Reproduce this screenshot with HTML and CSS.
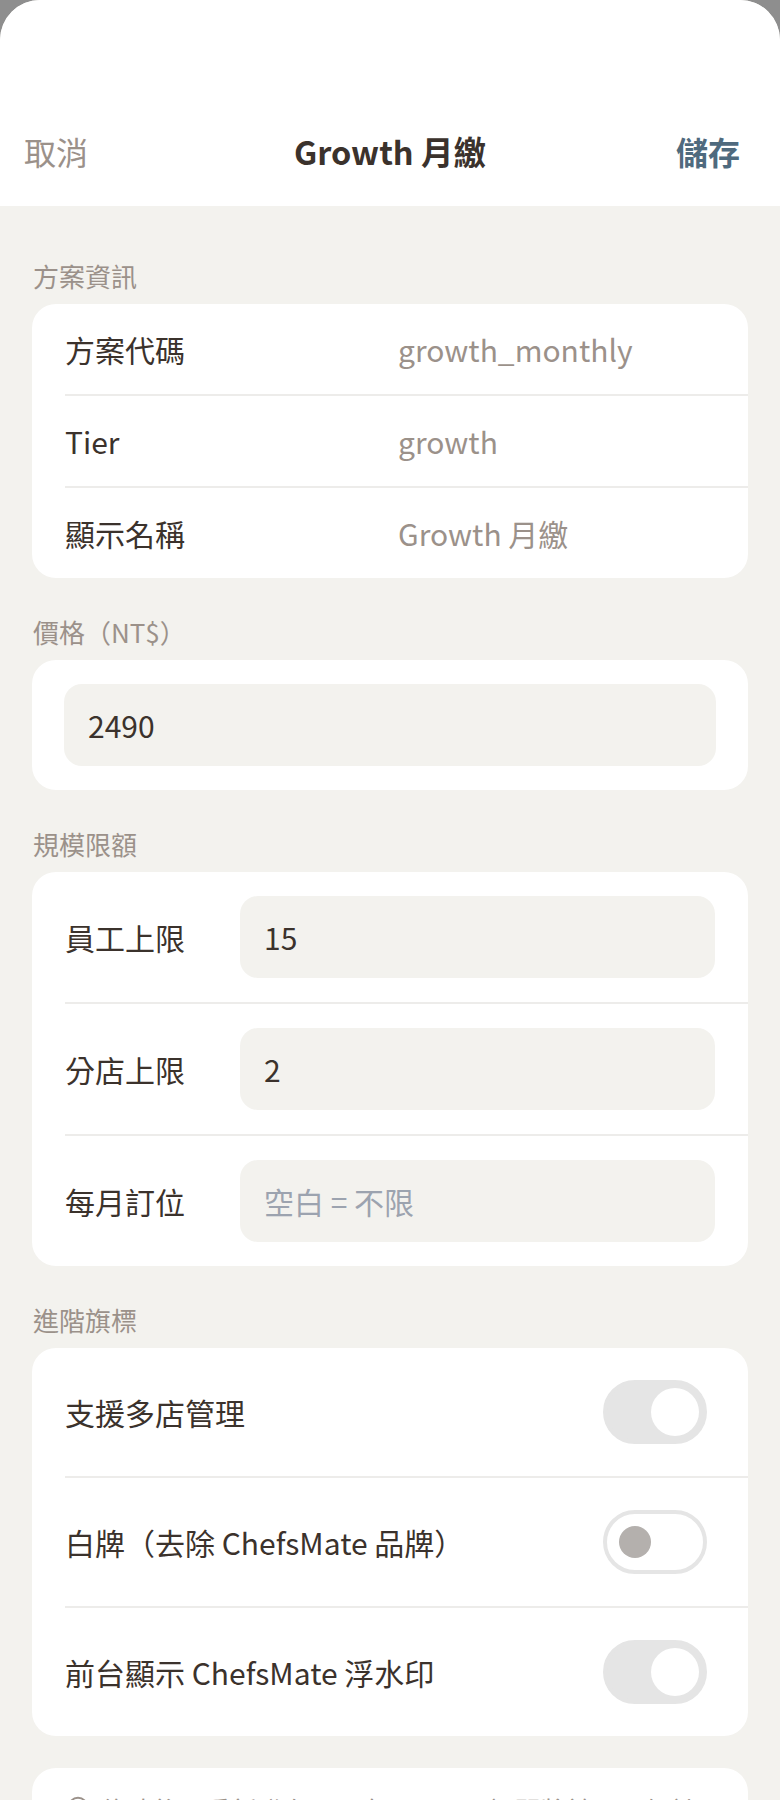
FILE: index.html
```html
<!DOCTYPE html>
<html lang="zh-Hant">
<head>
<meta charset="UTF-8" />
<meta name="viewport" content="width=device-width, initial-scale=1" />
<title>Growth 月繳</title>
<link rel="stylesheet" href="styles.css">
</head>
<body>

<div class="sheet">
  <header class="nav">
    <button class="nav-btn cancel">取消</button>
    <h1>Growth 月繳</h1>
    <button class="nav-btn save">儲存</button>
  </header>

  <main class="form">
    <section>
      <h3>方案資訊</h3>
      <div class="card">
        <div class="row info"><span class="label">方案代碼</span><span class="value">growth_monthly</span></div>
        <div class="row info"><span class="label">Tier</span><span class="value">growth</span></div>
        <div class="row info"><span class="label">顯示名稱</span><span class="value">Growth 月繳</span></div>
      </div>
    </section>

    <section>
      <h3>價格（NT$）</h3>
      <div class="card padded">
        <input class="field" type="text" value="2490">
      </div>
    </section>

    <section>
      <h3>規模限額</h3>
      <div class="card">
        <div class="row limit"><span class="label">員工上限</span><input class="field" type="text" value="15"></div>
        <div class="row limit"><span class="label">分店上限</span><input class="field" type="text" value="2"></div>
        <div class="row limit"><span class="label">每月訂位</span><input class="field" type="text" placeholder="空白 = 不限"></div>
      </div>
    </section>

    <section>
      <h3>進階旗標</h3>
      <div class="card">
        <div class="row flag"><span class="label">支援多店管理</span><span class="switch on"></span></div>
        <div class="row flag"><span class="label">白牌（去除 ChefsMate 品牌）</span><span class="switch"></span></div>
        <div class="row flag"><span class="label">前台顯示 ChefsMate 浮水印</span><span class="switch on"></span></div>
      </div>
    </section>

    <div class="card note">
      <svg class="note-icon" viewBox="0 0 24 24" width="22" height="22" fill="none" stroke="#9b918a" stroke-width="2.2">
        <circle cx="12" cy="12" r="10"/>
        <line x1="12" y1="11" x2="12" y2="17"/>
        <circle cx="12" cy="7.5" r="0.6" fill="#9b918a"/>
      </svg>
      <p>修改後需重新發布，現有 Growth 訂閱將於下一個計費週期生效。</p>
    </div>
  </main>
</div>

</body>
</html>
```

FILE: styles.css
```css
* {
  box-sizing: border-box;
}
body {
  margin: 0;
  background: #8e8e8e;
  font-family: "Noto Sans CJK TC", "Noto Sans", sans-serif;
  color: #3b322c;
}
.sheet {
  background: #f3f2ee;
  border-radius: 40px 40px 0 0;
  overflow: hidden;
  min-height: 1800px;
}

/* header */
.nav {
  height: 206px;
  padding: 96px 24px 0;
  background: #fff;
  display: grid;
  grid-template-columns: 1fr auto 1fr;
  align-items: center;
}
.nav h1 {
  margin: 0;
  font-size: 32.5px;
  font-weight: 700;
  line-height: 110px;
  color: #3b322c;
}
.nav-btn {
  border: 0;
  background: none;
  padding: 0;
  font-family: inherit;
  font-size: 32px;
  line-height: 110px;
  cursor: pointer;
}
.cancel {
  justify-self: start;
  color: #9b918a;
}
.save {
  justify-self: end;
  margin-right: 16px;
  color: #4f6a7e;
  font-weight: 700;
}

/* form */
.form {
  padding: 16px 32px 0;
}
section {
  margin-top: 34px;
}
h3 {
  margin: 0 0 8px;
  padding-left: 1px;
  font-size: 26px;
  font-weight: 400;
  line-height: 40px;
  color: #9b918a;
}
.card {
  background: #fff;
  border-radius: 24px;
}
.card.padded {
  padding: 24px 32px;
}
.row {
  box-sizing: content-box;
  margin-left: 33px;
  display: flex;
  align-items: center;
  font-size: 30px;
}
.row + .row {
  border-top: 2px solid #edecea;
}
.label {
  flex-shrink: 0;
}

.info {
  height: 90px;
}
.info .label {
  width: 333px;
}
.info .value {
  color: #9b918a;
}

.field {
  display: block;
  width: 100%;
  height: 82px;
  border: 0;
  border-radius: 18px;
  background: #f3f2ee;
  padding: 0 24px;
  font-family: inherit;
  font-size: 30px;
  color: #3b322c;
  outline: none;
}
.field::placeholder {
  color: #9ca3af;
}
.limit {
  padding: 24px 33px 24px 0;
}
.limit .label {
  width: 175px;
}
.limit .field {
  flex: 1;
  min-width: 0;
}

.flag {
  height: 128px;
  justify-content: space-between;
  padding-right: 41px;
}

/* switch */
.switch {
  position: relative;
  width: 104px;
  height: 64px;
  border-radius: 32px;
  border: 4px solid #e5e5e5;
  background: #fff;
}
.switch::after {
  content: "";
  position: absolute;
  left: 12px;
  top: 12px;
  width: 32px;
  height: 32px;
  border-radius: 50%;
  background: #b4b0ad;
}
.switch.on {
  background: #e5e5e5;
}
.switch.on::after {
  left: 44px;
  top: 4px;
  width: 48px;
  height: 48px;
  background: #fff;
}

/* note */
.note {
  margin-top: 32px;
  padding: 24px 32px 24px 35px;
  display: flex;
  align-items: flex-start;
  gap: 12px;
}
.note-icon {
  flex-shrink: 0;
  margin-top: 4px;
}
.note p {
  margin: 0;
  font-size: 26px;
  line-height: 36px;
  color: #9b918a;
}
```
